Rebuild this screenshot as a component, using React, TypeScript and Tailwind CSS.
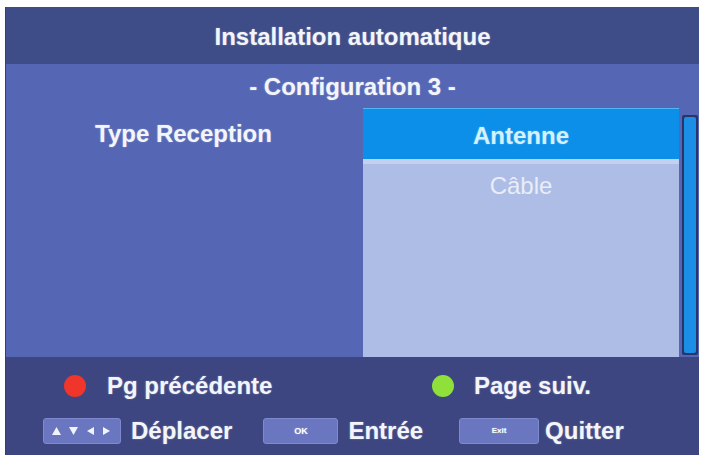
import React from 'react'

const font = { fontFamily: '"Liberation Sans", Arial, sans-serif' }

function Dot({ color }: { color: string }) {
  return <span className={`block h-[22px] w-[22px] shrink-0 rounded-full ${color}`} />
}

function Key({ children, w }: { children: React.ReactNode; w: string }) {
  return (
    <span
      className={`flex h-[26px] ${w} shrink-0 items-center justify-center rounded-[3px] border border-[#7d8acd] bg-[#6a77c0] text-[9px] font-bold leading-none text-white`}
    >
      {children}
    </span>
  )
}

function Arrows() {
  return (
    <svg width="62" height="10" viewBox="0 0 62 10" fill="#f2f4fb">
      <path d="M1 9 L5.5 1 L10 9 Z" />
      <path d="M18 1 L27 1 L22.5 9 Z" />
      <path d="M43 1 L43 9 L36 5 Z" />
      <path d="M52 1 L52 9 L59 5 Z" />
    </svg>
  )
}

export default function App() {
  return (
    <div className="h-[457px] w-[706px] bg-white pb-[2px] pl-[5px] pr-[7px] pt-[7px]" style={font}>
      <div className="flex h-[448px] flex-col border-l border-[#3a3f5a] text-[24px] font-bold leading-none text-[#f3f5fb] [text-shadow:0_0_2px_rgba(255,255,255,0.35)]">
        {/* header */}
        <div className="flex h-[57px] shrink-0 items-center justify-center bg-[#3e4c87] pt-[2px]">
          Installation automatique
        </div>

        {/* body */}
        <div className="flex h-[293px] shrink-0 flex-col bg-[#5466b4]">
          <div className="flex h-[44px] items-center justify-center pt-[2px]">- Configuration 3 -</div>
          <div className="flex">
            <div className="w-[357px] shrink-0 pl-[89px]">
              <div className="flex h-[52px] items-center">Type Reception</div>
            </div>
            <div className="flex h-[249px] w-[316px] shrink-0 flex-col border-t border-[#4fb6f5] bg-[#adbde6]">
              <div className="flex h-[50px] items-center justify-center bg-[#0b8fe8] pt-[3px] text-[#d3f1ff]">
                Antenne
              </div>
              <div className="h-[5px] bg-[#c3d1f1]" />
              <div className="flex h-[44px] items-center justify-center font-normal text-[#e8edf8] [text-shadow:none]">
                Câble
              </div>
            </div>
            <div className="ml-[3px] mt-[7px] flex h-[240px] w-[16px] shrink-0 rounded-[2px] bg-[#2a3468] p-[2px]">
              <div className="w-full rounded-[2px] bg-[#1b8fe6]" />
            </div>
          </div>
        </div>

        {/* footer */}
        <div className="flex flex-1 flex-col bg-[#3d4680]">
          <div className="flex h-[55px] items-center pl-[58px] pt-[3px]">
            <div className="flex w-[368px] items-center gap-[21px]">
              <Dot color="bg-[#f0352a]" />
              <span>Pg précédente</span>
            </div>
            <div className="flex items-center gap-[20px]">
              <Dot color="bg-[#8fe03a]" />
              <span>Page suiv.</span>
            </div>
          </div>
          <div className="mt-[6px] flex items-center pl-[37px]">
            <Key w="w-[78px]">
              <Arrows />
            </Key>
            <span className="ml-[10px]">Déplacer</span>
            <span className="ml-[31px]">
              <Key w="w-[75px]">OK</Key>
            </span>
            <span className="ml-[10px]">Entrée</span>
            <span className="ml-[36px]">
              <Key w="w-[80px]">
                <span className="text-[8px]">Exit</span>
              </Key>
            </span>
            <span className="ml-[6px]">Quitter</span>
          </div>
        </div>
      </div>
    </div>
  )
}
